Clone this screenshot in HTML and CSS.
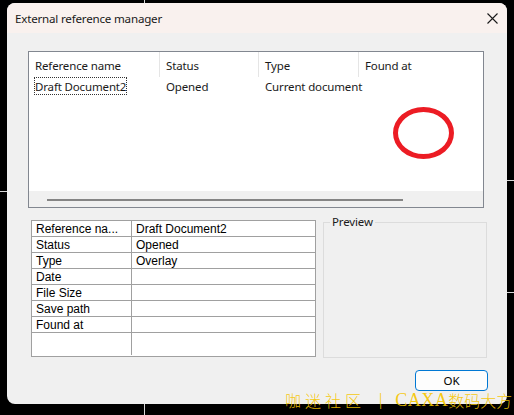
FILE: index.html
```html
<!DOCTYPE html>
<html>
<head>
<meta charset="utf-8">
<title>External reference manager</title>
<link rel="stylesheet" href="styles.css">
</head>
<body>
<div class="canvas">
  <div class="cad-line vline"></div>
  <div class="cad-line hline hline-r1"></div>
  <div class="cad-line hline hline-r2"></div>
  <div class="cad-line hline hline-l1"></div>

  <div class="dialog">
    <div class="titlebar">
      <span class="title">External reference manager</span>
      <span class="close" aria-label="Close">
        <svg width="11" height="11" viewBox="0 0 11 11"><path d="M0.5 0.5 L10.5 10.5 M10.5 0.5 L0.5 10.5" stroke="#1a1a1a" stroke-width="1.1" fill="none"/></svg>
      </span>
    </div>

    <div class="body">
      <div class="list">
        <div class="list-header">
          <div class="hcell c1">Reference name</div>
          <div class="hcell c2">Status</div>
          <div class="hcell c3">Type</div>
          <div class="hcell c4">Found at</div>
        </div>
        <div class="list-row">
          <div class="cell c1"><span class="focus">Draft Document2</span></div>
          <div class="cell c2">Opened</div>
          <div class="cell c3">Current document</div>
          <div class="cell c4"></div>
        </div>
        <div class="list-space">
          <div class="mark"></div>
        </div>
        <div class="hscroll"><div class="thumb"></div></div>
      </div>

      <div class="lower">
        <div class="grid">
          <div class="grow"><div class="gk">Reference na...</div><div class="gv">Draft Document2</div></div>
          <div class="grow"><div class="gk">Status</div><div class="gv">Opened</div></div>
          <div class="grow"><div class="gk">Type</div><div class="gv">Overlay</div></div>
          <div class="grow"><div class="gk">Date</div><div class="gv"></div></div>
          <div class="grow"><div class="gk">File Size</div><div class="gv"></div></div>
          <div class="grow"><div class="gk">Save path</div><div class="gv"></div></div>
          <div class="grow"><div class="gk">Found at</div><div class="gv"></div></div>
          <div class="grow last"><div class="gk"></div><div class="gv"></div></div>
        </div>
        <fieldset class="preview">
          <legend>Preview</legend>
        </fieldset>
      </div>

      <div class="footer">
        <button class="ok">OK</button>
      </div>
    </div>
  </div>

  <div class="watermark"><span class="wm-cn1">咖迷社区</span><span class="wm-bar">|</span><span class="wm-en">CAXA</span><span class="wm-cn2">数码大方</span></div>
</div>
</body>
</html>
```

FILE: styles.css
```css
html, body {
  margin: 0;
  padding: 0;
  background: #000;
}

.canvas {
  position: relative;
  width: 514px;
  height: 415px;
  overflow: hidden;
  background: #000;
  padding-top: 3px;
  box-sizing: border-box;
}

.cad-line {
  position: absolute;
  background: #d8d8d8;
}
.vline { left: 144px; top: 0; width: 1px; height: 415px; }
.hline { height: 1px; }
.hline-r1 { left: 507px; top: 180px; width: 7px; }
.hline-r2 { left: 507px; top: 292px; width: 7px; }
.hline-l1 { left: 0; top: 191px; width: 7px; }

.dialog {
  position: relative;
  margin-left: 7px;
  width: 500px;
  height: 401px;
  background: #f0f0f0;
  border-radius: 8px;
  overflow: hidden;
  font-family: "Noto Sans", "Open Sans", sans-serif;
  font-size: 11.5px;
  color: #000;
}

.titlebar {
  height: 30px;
  background: #f9f1ee;
  display: flex;
  align-items: center;
  justify-content: space-between;
  padding: 0 9px 0 8px;
}
.title {
  font-size: 11.6px;
  color: #1a1a1a;
  letter-spacing: -0.2px;
}
.close {
  display: flex;
  width: 11px;
  height: 11px;
}

.body {
  padding: 18px 0 0 21px;
}

.list {
  width: 454px;
  height: 155px;
  border: 1px solid #828790;
  background: #fff;
  display: flex;
  flex-direction: column;
}

.list-header, .list-row {
  display: flex;
  white-space: nowrap;
}
.list-header {
  height: 25px;
}
.hcell {
  box-sizing: border-box;
  height: 25px;
  padding: 2px 0 0 6px;
  line-height: 23px;
  border-right: 1px solid #e5e5e5;
  color: #1a1a1a;
  letter-spacing: -0.15px;
}
.c1 { width: 131px; }
.c2 { width: 99px; }
.c3 { width: 100px; }
.c4 { flex: 1; border-right: none; }

.list-row {
  height: 18px;
}
.cell {
  box-sizing: border-box;
  padding: 1px 0 0 6px;
  line-height: 17px;
  color: #1a1a1a;
  letter-spacing: -0.15px;
}
.cell.c1 { padding-left: 5px; padding-top: 0; }
.focus {
  display: inline-block;
  outline: 1px dotted #333;
  outline-offset: -1px;
  padding: 1px 1px 0;
  line-height: 17px;
}

.list-space {
  flex: 1;
  position: relative;
}
.mark {
  position: absolute;
  left: 364px;
  top: 12px;
  width: 61px;
  height: 52px;
  box-sizing: border-box;
  border: 5px solid #ec1c24;
  border-radius: 50%;
}

.hscroll {
  height: 16px;
  background: #f0f0f0;
  display: flex;
  align-items: center;
}
.thumb {
  margin-left: 18px;
  width: 356px;
  height: 2px;
  margin-top: 1px;
  background: #858585;
}

.lower {
  display: flex;
  align-items: flex-start;
  margin-top: 12px;
  padding-left: 3px;
}

.grid {
  width: 283px;
  border: 1px solid #a0a0a0;
  background: #fff;
  font-family: "Liberation Sans", Arial, sans-serif;
  font-size: 12px;
}
.grow {
  display: flex;
  height: 15px;
  border-bottom: 1px solid #a0a0a0;
}
.grow.last {
  height: 23px;
  border-bottom: none;
}
.gk {
  width: 100px;
  border-right: 1px solid #a0a0a0;
  padding: 1px 0 0 4px;
  line-height: 14px;
  box-sizing: border-box;
}
.gv {
  flex: 1;
  padding: 1px 0 0 4px;
  line-height: 14px;
}
.grow.last .gk {
  height: 22px;
}

.preview {
  margin: -5px 0 0 7px;
  padding: 0;
  width: 164px;
  height: 143px;
  box-sizing: border-box;
  border: 1px solid #dcdcdc;
  min-width: 0;
}
.preview legend {
  margin-left: 6px;
  padding: 0 2px;
  font-size: 11.5px;
  line-height: 14px;
  color: #1a1a1a;
  letter-spacing: -0.15px;
}

.footer {
  display: flex;
  justify-content: flex-end;
  padding-right: 19px;
  margin-top: 12px;
}
.ok {
  width: 73px;
  height: 21px;
  border: 1px solid #0078d4;
  border-radius: 4px;
  background: #fdfdfd;
  font-family: "Noto Sans", "Open Sans", sans-serif;
  font-size: 11.5px;
  color: #000;
  padding: 0;
  line-height: 18px;
}

.watermark {
  position: absolute;
  left: 285px;
  top: 390px;
  display: flex;
  align-items: center;
  color: rgba(245, 197, 0, 0.92);
  font-size: 16px;
  line-height: 20px;
  white-space: nowrap;
}
.wm-cn1 {
  font-family: "Noto Sans CJK SC", sans-serif;
  font-weight: 300;
  letter-spacing: 4px;
}
.wm-bar {
  font-family: "Liberation Serif", serif;
  margin: 0 13px 0 14px;
}
.wm-en {
  font-family: "Liberation Serif", serif;
  font-size: 18px;
  letter-spacing: 0.5px;
}
.wm-cn2 {
  font-family: "Noto Sans CJK SC", sans-serif;
  font-weight: 300;
}
```
